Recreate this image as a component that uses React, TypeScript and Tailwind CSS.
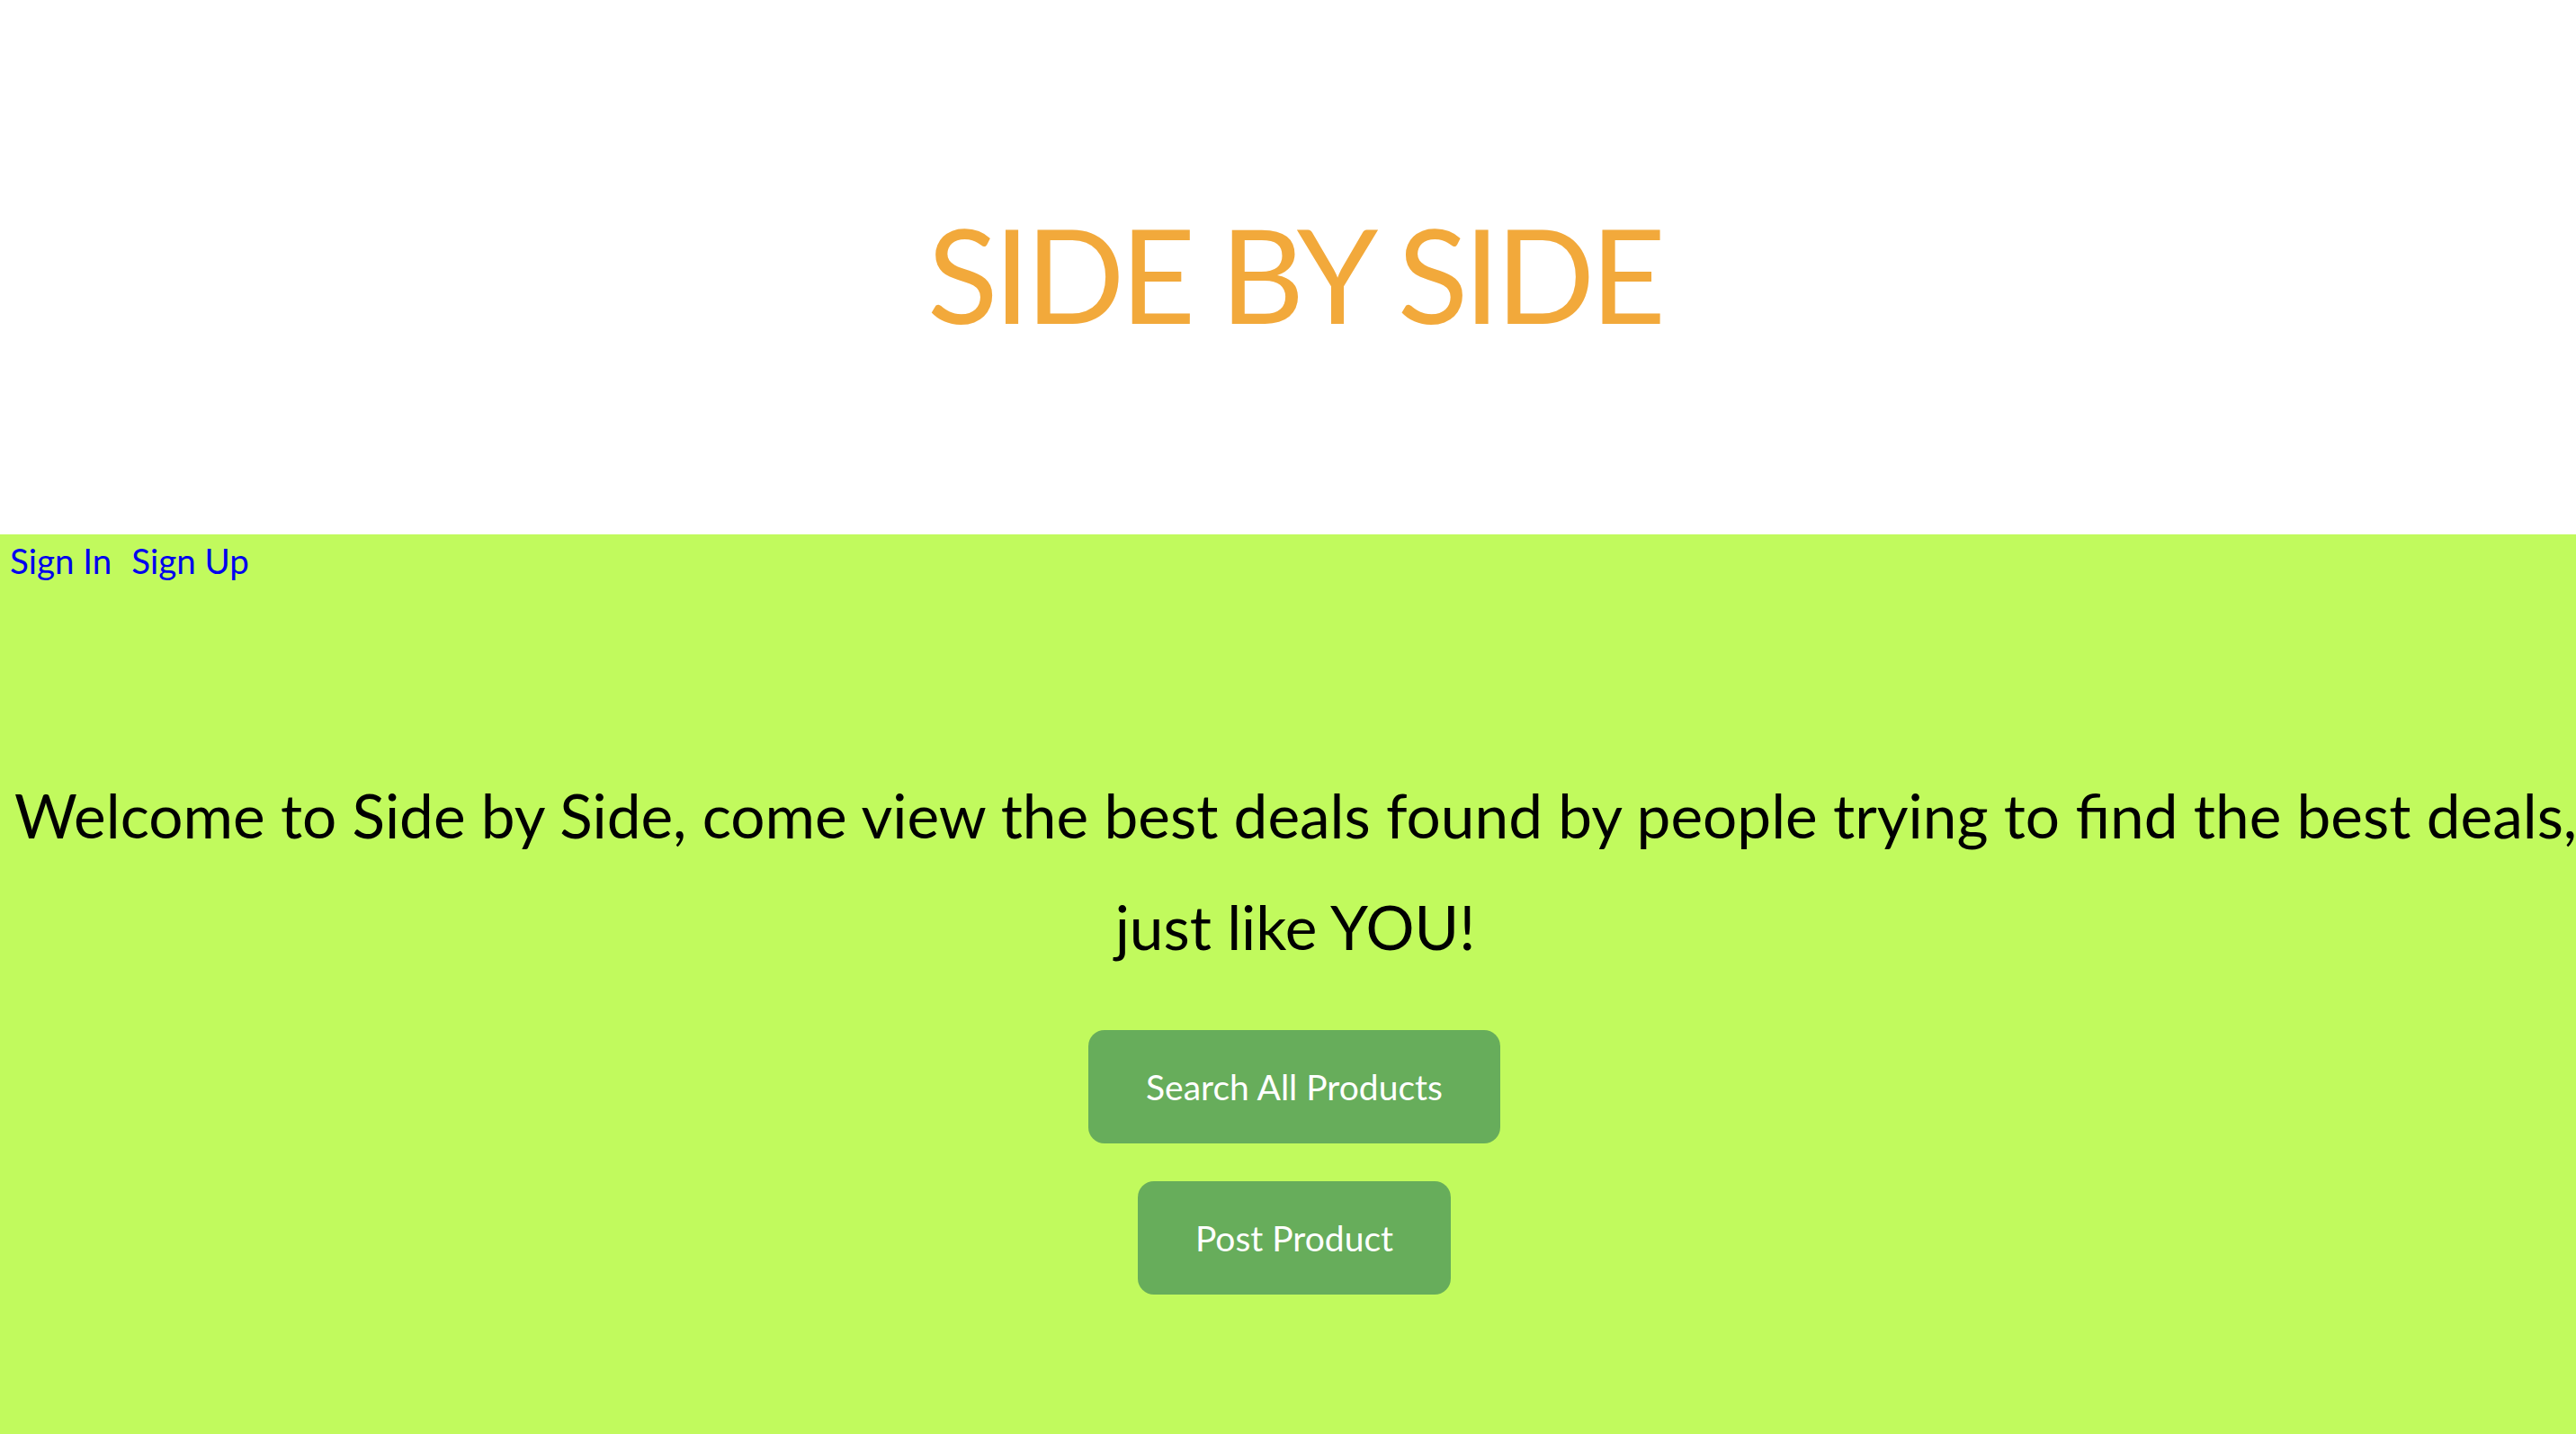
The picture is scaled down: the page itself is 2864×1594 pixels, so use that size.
import React from 'react';

const App: React.FC = () => {
    return (
        <div className="min-h-screen bg-[#c1fa5d] font-['Lato',sans-serif]">
            {/* Header */}
            <header className="h-[594px] flex items-center justify-center bg-white pt-[14px] pl-[14px]">
                <h1 className="text-[145px] leading-none font-normal tracking-[-5px] text-[#f2a93b]">SIDE BY SIDE</h1>
            </header>

            <main className="bg-[#c1fa5d] pb-[150px]">
                <nav className="flex gap-[22px] pl-[11px] pt-[8px] text-[38.5px] leading-[42px] text-[#0000ee]">
                    <a href="#">Sign In</a>
                    <a href="#">Sign Up</a>
                </nav>

                <p className="mt-[200px] pl-[16px] text-center text-[67.5px] leading-[124px] text-black whitespace-nowrap">
                    Welcome to Side by Side, come view the best deals found by people trying to find the best deals,
                    <br />
                    just like YOU!
                </p>

                <div className="mt-[53px] pl-[14px] flex flex-col items-center gap-[42px]">
                    <button className="h-[126px] px-[64px] rounded-[18px] bg-[#67ad5b] text-white text-[39px]">
                        Search All Products
                    </button>
                    <button className="h-[126px] px-[64px] rounded-[18px] bg-[#67ad5b] text-white text-[39px]">
                        Post Product
                    </button>
                </div>
            </main>
        </div>
    );
};

export default App;
